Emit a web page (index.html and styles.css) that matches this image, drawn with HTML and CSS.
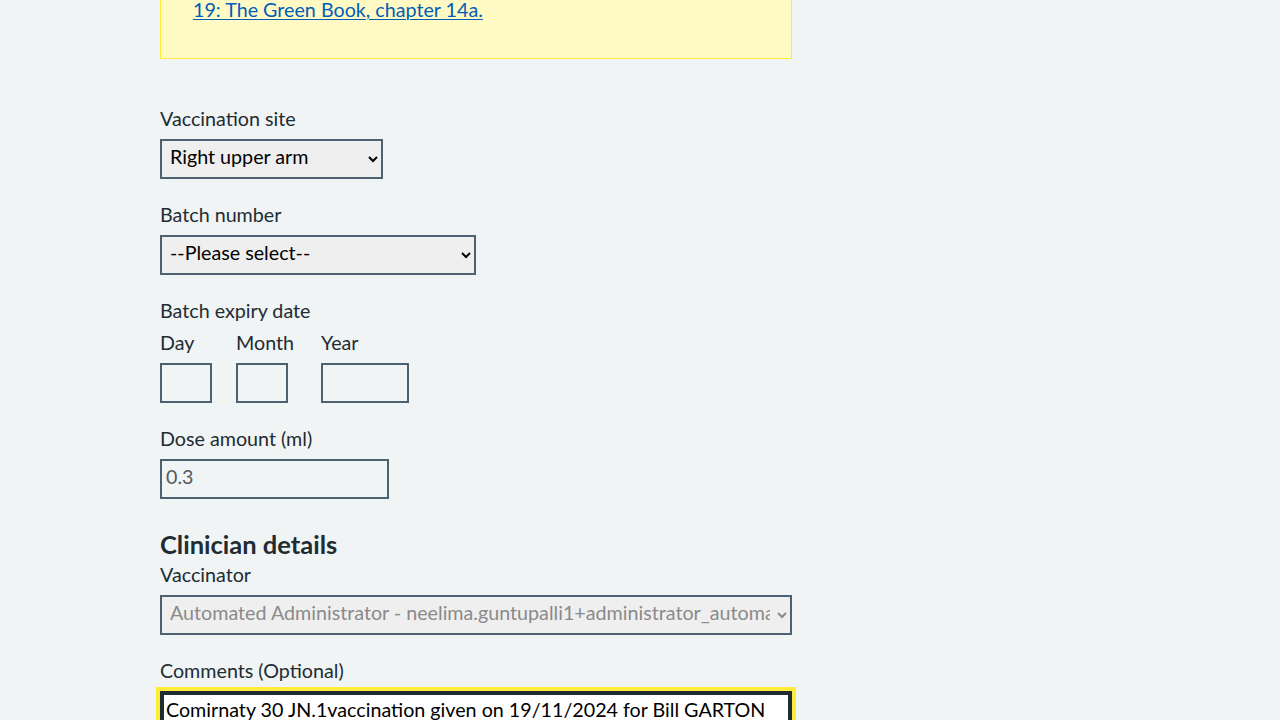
FILE: index.html
```html
<!DOCTYPE html>
<html lang="en">
<head>
<meta charset="utf-8">
<title>Record vaccination</title>
<link rel="stylesheet" href="styles.css">
</head>
<body>
<main class="main">
  <div class="callout">
    <p class="callout-text"><a href="#" class="link">19: The Green Book, chapter 14a.</a></p>
  </div>

  <div class="form-group">
    <label class="label" for="site">Vaccination site</label>
    <select class="select select-site" id="site">
      <option>Right upper arm</option>
    </select>
  </div>

  <div class="form-group">
    <label class="label" for="batch">Batch number</label>
    <select class="select select-batch" id="batch">
      <option>--Please select--</option>
    </select>
  </div>

  <div class="form-group">
    <div class="label">Batch expiry date</div>
    <div class="date">
      <div class="date-item">
        <label class="label" for="d">Day</label>
        <input class="input input-2" id="d" type="text">
      </div>
      <div class="date-item date-item-month">
        <label class="label" for="m">Month</label>
        <input class="input input-2" id="m" type="text">
      </div>
      <div class="date-item">
        <label class="label" for="y">Year</label>
        <input class="input input-4" id="y" type="text">
      </div>
    </div>
  </div>

  <div class="form-group">
    <label class="label" for="dose">Dose amount (ml)</label>
    <input class="input input-dose" id="dose" type="text" value="0.3" readonly>
  </div>

  <h2 class="heading">Clinician details</h2>
  <div class="form-group">
    <label class="label" for="vacc">Vaccinator</label>
    <select class="select select-full" id="vacc" disabled>
      <option>Automated Administrator - neelima.guntupalli1+administrator_automation@nhs.net</option>
    </select>
  </div>

  <div class="form-group">
    <label class="label" for="comments">Comments (Optional)</label>
    <textarea class="textarea" id="comments" rows="3">Comirnaty 30 JN.1vaccination given on 19/11/2024 for Bill GARTON</textarea>
  </div>
</main>
</body>
</html>
```
FILE: styles.css
```css
html, body {
  margin: 0;
  padding: 0;
  background: #f0f4f5;
  color: #212b32;
  font-family: Lato, "Liberation Sans", Arial, sans-serif;
  font-size: 19.7px;
}
.main {
  width: 632px;
  padding: 0 0 0 160px;
}
.callout {
  margin-top: -37px;
  background: #fff9c4;
  border: 1px solid #ffeb3b;
  padding: 32px 32px 32px 32px;
}
.callout-text {
  margin: 0;
  line-height: 28px;
  padding-bottom: 2px;
}
.link {
  color: #005eb8;
  text-decoration: underline;
  text-underline-offset: 2px;
  text-decoration-thickness: 1px;
}
.form-group {
  margin-top: 24px;
}
.callout + .form-group {
  margin-top: 48px;
}
.label {
  display: block;
  line-height: 24px;
  margin-bottom: 8px;
  color: #212b32;
}
.select {
  font-family: inherit;
  font-size: 19.7px;
  height: 40px;
  border: 2px solid #4c6272;
  border-radius: 0;
  background-color: #efefef;
  color: #000;
  padding: 0 4px 5px 4px;
  box-sizing: border-box;
  display: block;
}
.select-site { width: 223px; }
.select-batch { width: 316px; }
.select-full { width: 632px; }
.select:disabled {
  color: #8a8a8a;
  opacity: 1;
  background-color: #efefef;
  border-color: #4c6272;
}
.date {
  display: flex;
  gap: 24px;
}
.date-item {
  display: flex;
  flex-direction: column;
  align-items: flex-start;
}
.date-item-month {
  min-width: 61px;
}
.input {
  font-family: inherit;
  font-size: 19.7px;
  height: 40px;
  box-sizing: border-box;
  border: 2px solid #4c6272;
  border-radius: 0;
  background: transparent;
  padding: 1px 4px 7px 4px;
  color: #555b60;
  display: block;
}
.input-2 { width: 52px; }
.input-4 { width: 88px; }
.input-dose { width: 229px; }
.heading {
  font-size: 25.5px;
  font-weight: 700;
  margin: 29px 0 0 0;
  line-height: 32px;
}
.heading + .form-group {
  margin-top: 3px;
}
.textarea {
  display: block;
  width: 632px;
  box-sizing: border-box;
  font-family: inherit;
  font-size: 19.7px;
  line-height: 28px;
  border: 2px solid #212b32;
  box-shadow: inset 0 0 0 2px #212b32;
  outline: 4px solid #ffeb3b;
  background: #fff;
  color: #000;
  padding: 3px 4px;
  resize: none;
  border-radius: 0;
}
```
